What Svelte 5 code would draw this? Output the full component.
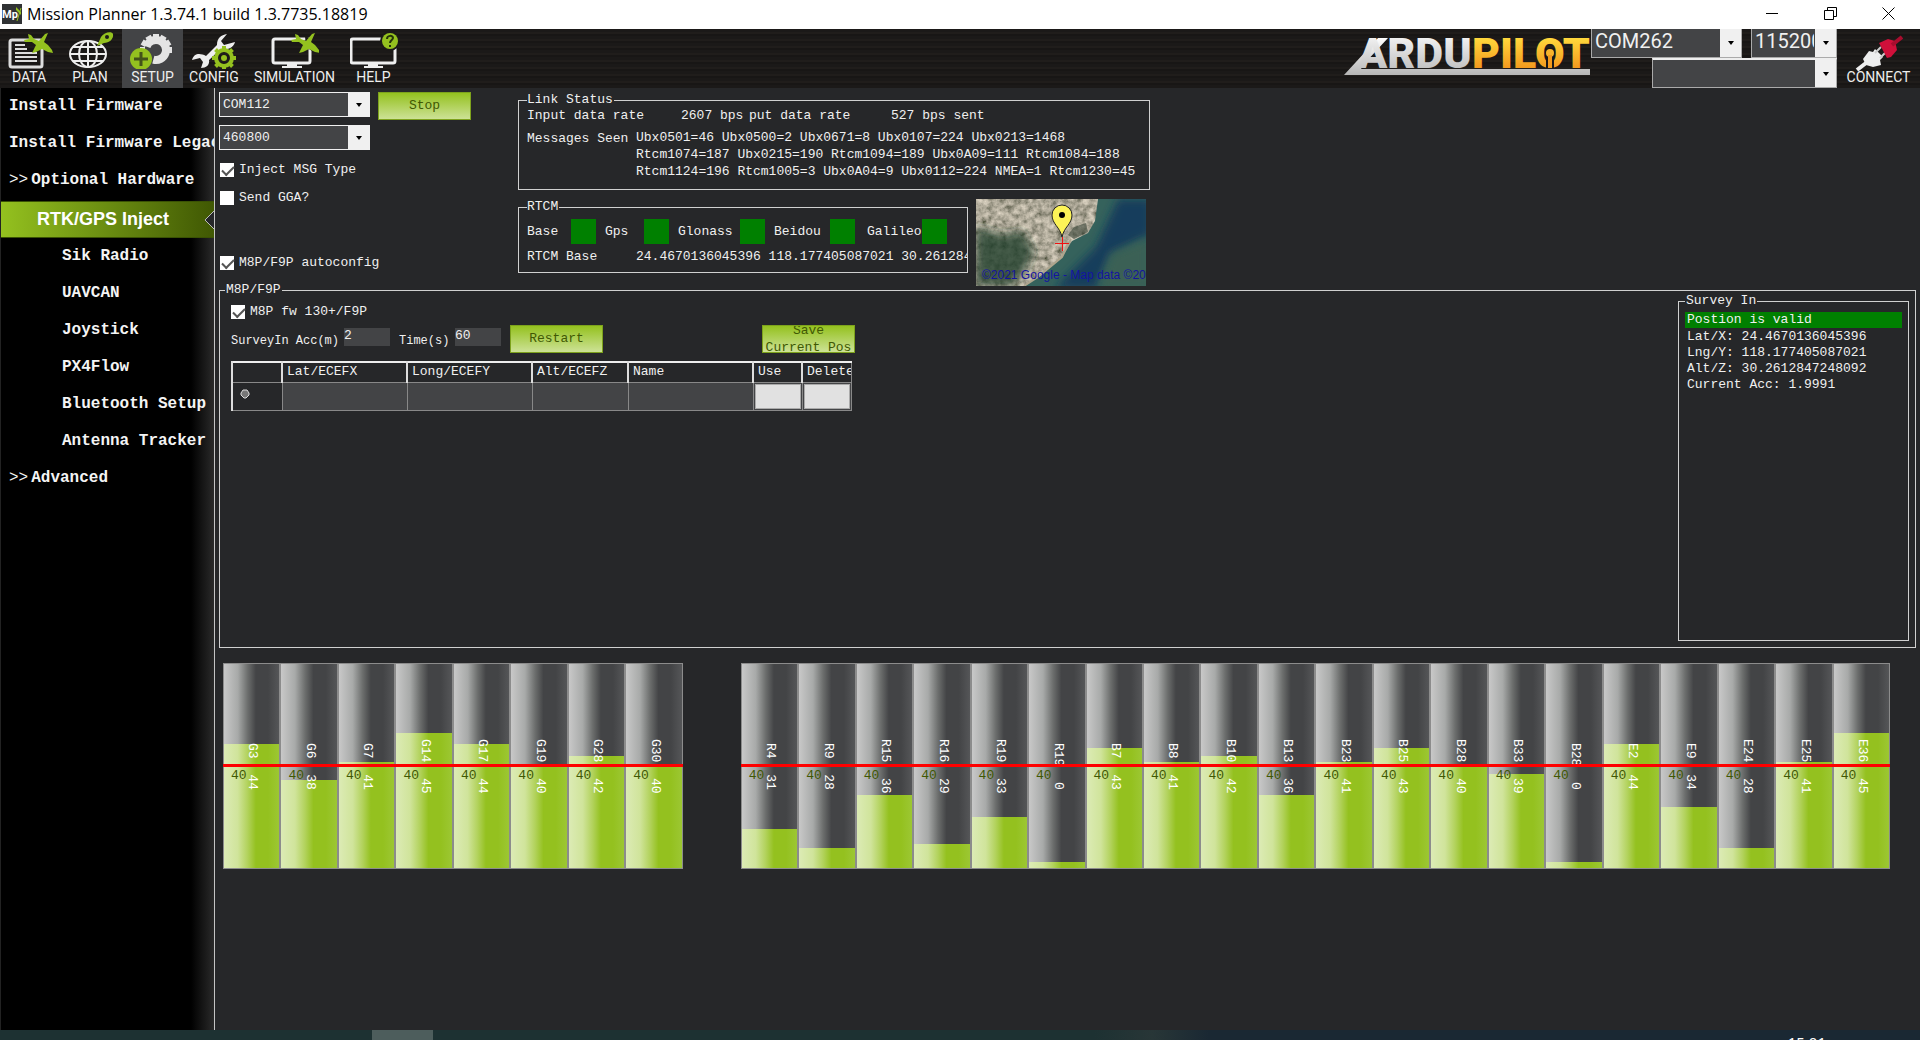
<script>
    const menu = [
        { label: "DATA", icon: "data", width: 58 },
        { label: "PLAN", icon: "plan", width: 64 },
        { label: "SETUP", icon: "setup", width: 61 },
        { label: "CONFIG", icon: "config", width: 62 },
        { label: "SIMULATION", icon: "simulation", width: 99 },
        { label: "HELP", icon: "help", width: 59 },
    ];
    let activeMenu = $state("SETUP");

    const pages = [
        { label: "Install Firmware" },
        { label: "Install Firmware Legacy" },
        { label: "Optional Hardware", expander: true },
        { label: "RTK/GPS Inject", sub: true },
        { label: "Sik Radio", sub: true },
        { label: "UAVCAN", sub: true },
        { label: "Joystick", sub: true },
        { label: "PX4Flow", sub: true },
        { label: "Bluetooth Setup", sub: true },
        { label: "Antenna Tracker", sub: true },
        { label: "Advanced", expander: true },
    ];
    let activePage = $state("RTK/GPS Inject");

    let injectMsgType = $state(true);
    let sendGGA = $state(false);
    let autoconfig = $state(true);
    let m8pFw = $state(true);
    let surveyAcc = $state("2");
    let surveyTime = $state("60");

    const systems = [
        { name: "Base", width: 78 },
        { name: "Gps", width: 73 },
        { name: "Glonass", width: 96 },
        { name: "Beidou", width: 93 },
        { name: "Galileo", width: 80 },
    ];

    // satellite, signal, fill in percent
    const gpsSats = [
        ["G3", 44, 61], ["G6", 38, 43], ["G7", 41, 52], ["G14", 45, 66],
        ["G17", 44, 61], ["G19", 40, 50], ["G28", 42, 55], ["G30", 40, 50],
    ];
    const otherSats = [
        ["R4", 31, 19], ["R9", 28, 10], ["R15", 36, 36], ["R16", 29, 12],
        ["R19", 33, 25], ["R19", 0, 3], ["B7", 43, 59], ["B8", 41, 52],
        ["B10", 42, 55], ["B13", 36, 36], ["B23", 41, 52], ["B25", 43, 59],
        ["B28", 40, 50], ["B33", 39, 46], ["B28", 0, 3], ["E2", 44, 61],
        ["E9", 34, 30], ["E24", 28, 10], ["E25", 41, 52], ["E36", 45, 66],
    ];

    const teeth = [0, 45, 90, 135, 180, 225, 270, 315];
    const bigTeeth = [-120, -90, -60, -30, 0, 30, 60, 90];
</script>

{#snippet plane()}
    <path fill="#94c11f" d="M4 1 L7 2 L10 6 L15 8 L21 1 L24 0 L20 9 L24 12 L28 17 L29 20 L24 19 L18 16 L12 19 L8 20 L12 12 L8 9 L1 9 L0 7 L5 6 Z" />
{/snippet}

{#snippet menuIcon(name)}
    <svg class="menu-icon" width="48" height="38" viewBox="0 0 48 38" aria-hidden="true">
        {#if name === "data"}
            <rect x="5" y="9" width="32" height="27" rx="2" fill="none" stroke="#ddd" stroke-width="3" />
            <path d="M10 14h10M10 18h12M10 22h22M10 26h22M10 30h22" stroke="#ddd" stroke-width="2" />
            <g transform="translate(19 2)">{@render plane()}</g>
        {:else if name === "plan"}
            <ellipse cx="22" cy="23" rx="18" ry="13" fill="none" stroke="#eee" stroke-width="2" />
            <ellipse cx="22" cy="23" rx="9" ry="13" fill="none" stroke="#eee" stroke-width="2" />
            <path d="M22 10v26M4 23h36M7 16h30M7 30h30" stroke="#eee" stroke-width="2" />
            <path fill="#94c11f" d="M31 15 L35 6 C38 1 46 0 47 3 C48 8 43 12 38 12 Z" />
            <circle cx="41" cy="6" r="2" fill="#1b1918" />
        {:else if name === "setup"}
            <circle cx="27" cy="19" r="10" fill="none" stroke="#e4e4e4" stroke-width="8" stroke-dasharray="46 17" transform="rotate(-160 27 19)" />
            {#each bigTeeth as a}
                <rect x="24" y="3" width="6" height="5" fill="#e4e4e4" transform={`rotate(${a} 27 19)`} />
            {/each}
            <circle cx="12" cy="28" r="11" fill="#94c11f" />
            <path d="M12 21v14M5 28h14" stroke="#43521a" stroke-width="3" />
        {:else if name === "config"}
            <path d="M37 3 L31 10 L34 14 L45 11 C43 18 36 19 31 18 L19 29 C20 34 16 37 11 37 L13 31 L10 27 L2 29 C4 22 10 22 16 25 L27 14 C27 7 31 4 37 3 Z" fill="#eee" />
            <circle cx="34" cy="27" r="8" fill="none" stroke="#94c11f" stroke-width="4" />
            {#each teeth as a}
                <rect x="32" y="15" width="4" height="4" fill="#94c11f" transform={`rotate(${a} 34 27)`} />
            {/each}
            <circle cx="34" cy="27" r="3" fill="#94c11f" />
        {:else if name === "simulation"}
            <rect x="2" y="8" width="37" height="24" rx="2" fill="none" stroke="#eee" stroke-width="3" />
            <path d="M16 32h10v3h5v2H11v-2h5z" fill="#eee" />
            <path d="M34 5l7 3v12l-6-4z" fill="#1b1918" />
            <g transform="translate(20 2)">{@render plane()}</g>
        {:else if name === "help"}
            <rect x="1" y="8" width="44" height="24" rx="2" fill="none" stroke="#eee" stroke-width="3" />
            <path d="M18 32h10v3h5v2H14v-2h4z" fill="#eee" />
            <circle cx="40" cy="10" r="10" fill="#1b1918" />
            <circle cx="40" cy="10" r="8" fill="#94c11f" />
            <path d="M37 8c0-4 6-4 6-1 0 2-3 2-3 5M40 14v2" fill="none" stroke="#25330a" stroke-width="2" />
        {/if}
    </svg>
{/snippet}

{#snippet barGroup(sats, label)}
    <div class="bar-group" style={`flex-grow: ${sats.length}`} role="group" aria-label={label}>
        {#each sats as [name, snr, fill]}
            <div class="bar">
                <div class="fill" style={`height: ${fill}%`}></div>
                <span class="sat">{`${name}  ${snr}`}</span>
                <span class="threshold">40</span>
            </div>
        {/each}
        <div class="limit"></div>
    </div>
{/snippet}

<div class="window">
    <header class="titlebar">
        <svg width="20" height="20" viewBox="0 0 20 20" aria-hidden="true">
            <rect width="20" height="20" fill="#303234" />
            <path d="M14 3l5 5v3l-5-5z" fill="#94c11f" />
            <path d="M15 17l4-13" stroke="#94c11f" />
            <text x="0" y="14" font-family="Roboto, sans-serif" font-size="11" font-weight="700" fill="#fff">Mp</text>
        </svg>
        <span class="title">Mission Planner 1.3.74.1 build 1.3.7735.18819</span>
        <div class="window-buttons">
            <button aria-label="Minimize"><svg width="12" height="12" viewBox="0 0 12 12"><path d="M0 5.5h12" stroke="#000" /></svg></button>
            <button aria-label="Restore"><svg width="13" height="13" viewBox="0 0 13 13"><path d="M.5 3.5h9v9h-9zM3.5 3V.5h9v9H10" fill="none" stroke="#000" /></svg></button>
            <button aria-label="Close"><svg width="13" height="13" viewBox="0 0 13 13"><path d="M.5.5l12 12M12.500.5l-12 12" stroke="#000" /></svg></button>
        </div>
    </header>

    <nav class="toolbar">
        {#each menu as item}
            <button
                class={{ "menu-button": true, active: activeMenu === item.label }}
                style={`width: ${item.width}px`}
                onclick={() => (activeMenu = item.label)}
            >
                {@render menuIcon(item.icon)}
                <span>{item.label}</span>
            </button>
        {/each}

        <svg class="logo" width="246" height="40" viewBox="0 0 246 40" role="img" aria-label="ArduPilot">
            <defs>
                <linearGradient id="silver" x1="0" y1="0" x2="0" y2="1">
                    <stop offset="0" stop-color="#fff" />
                    <stop offset="1" stop-color="#b5b5b5" />
                </linearGradient>
                <linearGradient id="gold" x1="0" y1="0" x2="0" y2="1">
                    <stop offset="0.2" stop-color="#ffd83c" />
                    <stop offset="0.8" stop-color="#f39a1e" />
                </linearGradient>
            </defs>
            <path d="M0 38 L34 1 L44 1 L20 27 L17 32 L246 32 V38 Z" fill="url(#silver)" />
            <text x="14" y="31" class="logo-text" fill="url(#silver)">ARDU</text>
            <text x="128" y="31" class="logo-text" fill="url(#gold)">PILOT</text>
            <path d="M206 18v13" stroke="#1b1918" stroke-width="8" />
            <circle cx="206" cy="16" r="4" fill="#f8b42c" />
            <path d="M206 18v13" stroke="#f39a1e" stroke-width="4" />
        </svg>

        <div class="link-settings">
            <div class="link-row">
                <div class="combo large port">
                    <select aria-label="Port"><option>COM262</option></select>
                </div>
                <div class="combo large baud">
                    <select aria-label="Baud rate"><option>115200</option></select>
                </div>
            </div>
            <div class="combo large vehicle">
                <select aria-label="Vehicle"><option></option></select>
            </div>
        </div>

        <button class="menu-button connect">
            <svg class="menu-icon" width="48" height="38" viewBox="0 0 48 38" aria-hidden="true">
                <path d="M2 36l9-7" stroke="#eee" stroke-width="4" />
                <path d="M8 25l6-8 4 1 2-3 8 8-3 3 1 5-8 2-7-2z" fill="#eee" />
                <path d="M20 19l6-6M25 24l6-6" stroke="#ccc" stroke-width="2" />
                <path d="M24 9l9-4 7 2 2 9-6 7-4 1z" fill="#d0103a" />
                <path d="M37 11l10-8" stroke="#a80d2e" stroke-width="4" />
            </svg>
            <span>CONNECT</span>
        </button>
    </nav>

    <div class="body">
        <nav class="sidebar">
            {#each pages as page}
                <a
                    href="#{page.label}"
                    class={{ sub: page.sub, selected: activePage === page.label }}
                    onclick={() => (activePage = page.label)}
                >
                    {#if page.expander}<span class="chevrons">&gt;&gt;</span>{/if}{page.label}
                    {#if activePage === page.label}
                        <svg class="notch" width="10" height="18" viewBox="0 0 10 18" aria-hidden="true">
                            <path d="M10 0 L1 9 L10 18" fill="#262729" stroke="#bbb" />
                        </svg>
                    {/if}
                </a>
            {/each}
        </nav>

        <main>
            <section class="top">
                <div class="source">
                    <div class="port-row">
                        <div class="combo">
                            <select aria-label="Source port"><option>COM112</option></select>
                        </div>
                        <button class="green">Stop</button>
                    </div>
                    <div class="combo">
                        <select aria-label="Source baud rate"><option>460800</option></select>
                    </div>
                    <label class="check inject"><input type="checkbox" bind:checked={injectMsgType}>Inject MSG Type</label>
                    <label class="check gga"><input type="checkbox" bind:checked={sendGGA}>Send GGA?</label>
                    <label class="check auto"><input type="checkbox" bind:checked={autoconfig}>M8P/F9P autoconfig</label>
                </div>

                <div class="status">
                    <fieldset class="link-status">
                        <legend>Link Status</legend>
                        <div class="rates">
                            <span class="rate-name">Input data rate</span>
                            <span class="rate-in">2607 bps</span>
                            <span class="rate-out">put data rate</span>
                            <span>527 bps sent</span>
                        </div>
                        <div class="messages">
                            <span class="messages-name">Messages Seen</span>
                            <p>
                                Ubx0501=46 Ubx0500=2 Ubx0671=8 Ubx0107=224 Ubx0213=1468<br>
                                Rtcm1074=187 Ubx0215=190 Rtcm1094=189 Ubx0A09=111 Rtcm1084=188<br>
                                Rtcm1124=196 Rtcm1005=3 Ubx0A04=9 Ubx0112=224 NMEA=1 Rtcm1230=45
                            </p>
                        </div>
                    </fieldset>

                    <div class="rtcm-row">
                        <fieldset class="rtcm">
                            <legend>RTCM</legend>
                            <div class="systems">
                                {#each systems as system}
                                    <div class="system" style={`width: ${system.width}px`}>
                                        <span>{system.name}</span>
                                        <i class="led"></i>
                                    </div>
                                {/each}
                            </div>
                            <div class="rtcm-base">
                                <span class="base-name">RTCM Base</span>
                                <span>24.4670136045396 118.177405087021 30.2612847248092</span>
                            </div>
                        </fieldset>

                        <svg class="map" width="170" height="87" viewBox="0 0 170 87" role="img" aria-label="Base position map">
                            <defs>
                                <filter id="terrain" x="0" y="0" width="100%" height="100%">
                                    <feTurbulence type="fractalNoise" baseFrequency="0.16" numOctaves="4" seed="8" />
                                    <feColorMatrix values="0.9 0 0 0 -0.02  0.8 0 0 0 0  0.7 0 0 0 -0.03  0 0 0 0 1" />
                                    <feComposite in2="SourceGraphic" operator="in" />
                                </filter>
                                <filter id="soft"><feGaussianBlur stdDeviation="4" /></filter>
                            </defs>
                            <rect width="170" height="87" fill="#35625c" />
                            <path d="M142 0 H175 V35 L135 55 L120 90 H78 L120 48 Z" fill="#143d5c" filter="url(#soft)" />
                            <path d="M172 40 L135 55 L123 90 H172 Z" fill="#3a6155" filter="url(#soft)" />
                            <path d="M0 0 H122 L119 22 L112 34 L96 42 L86 58 L62 78 L48 87 H0 Z" fill="#86796a" filter="url(#terrain)" />
                            <path d="M0 28 L26 36 L46 32 L58 52 L50 70 L36 87 H0 Z" fill="#1f3f2c" fill-opacity="0.8" filter="url(#soft)" />
                            <path d="M92 36 L98 28 L110 24 L112 33 L98 40 Z" fill="#1e2e22" fill-opacity="0.5" />
                            <path d="M95 40 L86 58 L62 78 L48 87" fill="none" stroke="#aea58d" stroke-width="2" />
                            <text x="6" y="80" font-family="Liberation Sans, sans-serif" font-size="12" fill="#1414a0">©2021 Google - Map data ©202</text>
                            <path d="M86 38 C84 28 76 25 76 16 A10 10 0 0 1 96 16 C96 25 88 28 86 38 Z" fill="#fcf357" stroke="#222" />
                            <circle cx="86" cy="16" r="3" fill="#000" />
                            <path d="M79 44.5h14M86.500 38v14" stroke="#f01010" stroke-width="1" />
                        </svg>
                    </div>
                </div>
            </section>

            <fieldset class="m8p">
                <legend>M8P/F9P</legend>
                <div class="m8p-body">
                    <div class="survey-setup">
                        <label class="check small"><input type="checkbox" bind:checked={m8pFw}>M8P fw 130+/F9P</label>
                        <div class="survey-row">
                            <label class="acc-name" for="acc">SurveyIn Acc(m)</label>
                            <input id="acc" type="text" bind:value={surveyAcc}>
                            <label class="time-name" for="time">Time(s)</label>
                            <input id="time" type="text" bind:value={surveyTime}>
                            <button class="green restart">Restart</button>
                            <button class="green save"><span>Save<br>Current Pos</span></button>
                        </div>
                        <table>
                            <colgroup>
                                <col class="row-head"><col class="wide"><col class="wide"><col class="alt"><col class="wide"><col class="narrow"><col class="narrow">
                            </colgroup>
                            <thead>
                                <tr>
                                    <th aria-label="Row"></th><th>Lat/ECEFX</th><th>Long/ECEFY</th><th>Alt/ECEFZ</th><th>Name</th><th>Use</th><th>Delete</th>
                                </tr>
                            </thead>
                            <tbody>
                                <tr>
                                    <th aria-label="New row">
                                        <svg width="10" height="10" viewBox="0 0 10 10" aria-hidden="true"><path d="M3 1h4l2 3v2L6 9H4L1 6V4z" fill="#777" stroke="#ddd" /></svg>
                                    </th>
                                    <td></td><td></td><td></td><td></td>
                                    <td><button class="cell-button" aria-label="Use"></button></td>
                                    <td><button class="cell-button" aria-label="Delete"></button></td>
                                </tr>
                            </tbody>
                        </table>
                    </div>

                    <fieldset class="survey-in">
                        <legend>Survey In</legend>
                        <p class="valid">Postion is valid</p>
                        <p>Lat/X: 24.4670136045396</p>
                        <p>Lng/Y: 118.177405087021</p>
                        <p>Alt/Z: 30.2612847248092</p>
                        <p>Current Acc: 1.9991</p>
                    </fieldset>
                </div>
            </fieldset>

            <section class="bars">
                {@render barGroup(gpsSats, "GPS")}
                {@render barGroup(otherSats, "Other systems")}
            </section>
        </main>
    </div>

    <footer class="taskbar">
        <span class="task"></span>
        <span class="clock">15:01</span>
    </footer>
</div>

<style>
    :global(body) {
        background-color: #262729;
    }

    * {
        box-sizing: border-box;
    }

    .window {
        display: flex;
        flex-direction: column;
        height: 100vh;
        overflow: hidden;
        color: #f0f0f0;
        background-color: #262729;
        font-family: "Liberation Mono", monospace;
        font-size: 13px;
        line-height: 16px;
    }

    button,
    select,
    input {
        margin: 0;
        padding: 0;
        border: none;
        border-radius: 0;
        font: inherit;
        color: inherit;
    }

    p {
        margin: 0;
    }

    /* Title bar */
    .titlebar {
        display: flex;
        align-items: center;
        flex: none;
        height: 29px;
        padding: 0 3px 2px 2px;
        background-color: #fff;
        color: #000;
    }

    .title {
        margin-left: 5px;
        font-family: "Open Sans", sans-serif;
        font-size: 16px;
    }

    .window-buttons {
        display: flex;
        margin-left: auto;
    }

    .window-buttons button {
        display: flex;
        align-items: center;
        justify-content: center;
        width: 58px;
        height: 27px;
        background: none;
    }

    /* Toolbar */
    .toolbar {
        display: flex;
        flex: none;
        height: 59px;
        background: repeating-linear-gradient(#1b1918 0 3px, #201d1b 3px 5px, #181615 5px 7px);
    }

    .menu-button {
        display: flex;
        flex-direction: column;
        align-items: center;
        flex: none;
        padding-top: 2px;
        background: none;
        font-family: Roboto, sans-serif;
        font-size: 14px;
        color: #eee;
    }

    .menu-button.active {
        background-color: #434446;
    }

    .menu-button span {
        line-height: 16px;
    }

    .menu-icon {
        display: block;
        flex: none;
    }

    .logo {
        flex: none;
        margin: 8px 1px 0 auto;
        overflow: visible;
    }

    .logo-text {
        font-family: Roboto, sans-serif;
        font-size: 43px;
        font-weight: 900;
    }

    .link-settings {
        display: flex;
        flex-direction: column;
        align-items: flex-end;
        flex: none;
        width: 246px;
    }

    .link-row {
        display: flex;
        justify-content: space-between;
        width: 100%;
    }

    .connect {
        width: 83px;
        padding-top: 5px;
    }

    .connect span {
        margin-top: -3px;
    }

    /* Combo boxes */
    .combo {
        position: relative;
        width: 151px;
        height: 25px;
        border: 1px solid #f0f0f0;
        background-color: #434446;
    }

    .combo::before {
        content: "";
        position: absolute;
        top: 0;
        right: 0;
        bottom: 0;
        width: 21px;
        background-color: #f0f0f0;
        pointer-events: none;
    }

    .combo::after {
        content: "";
        position: absolute;
        top: calc(50% - 2px);
        right: 7px;
        border: 3px solid transparent;
        border-top: 4px solid #000;
        border-bottom: none;
        pointer-events: none;
    }

    .combo select {
        display: block;
        width: 100%;
        height: 100%;
        padding: 0 22px 0 3px;
        appearance: none;
        background: none;
    }

    .combo.large {
        height: 29px;
        border-color: #aaa;
        border-top: none;
        font-family: Roboto, sans-serif;
        font-size: 20px;
    }

    .combo.large select {
        padding-bottom: 4px;
        line-height: 24px;
    }

    .combo.port {
        width: 151px;
    }

    .combo.baud {
        width: 86px;
    }

    .combo.vehicle {
        width: 185px;
        height: 30px;
        border-top: 2px solid #eee;
    }

    /* Sidebar */
    .body {
        display: flex;
        flex: 1;
        min-height: 0;
    }

    .sidebar {
        flex: none;
        width: 215px;
        border-left: 1px solid #222;
        border-right: 1px solid #c4c4c4;
        background: linear-gradient(to right, #000 190px, #2a2a2a 100%);
        font-size: 16px;
        font-weight: 700;
    }

    .sidebar a {
        display: block;
        position: relative;
        height: 37px;
        padding: 0 0 0 8px;
        overflow: hidden;
        line-height: 36px;
        white-space: nowrap;
        text-decoration: none;
        color: #f4f4f4;
    }

    .sidebar a.sub {
        padding-left: 61px;
    }

    .sidebar a.selected {
        margin-top: 2px;
        padding-left: 36px;
        border-top: 1px solid #3a5204;
        border-bottom: 1px solid #3a5204;
        background: linear-gradient(to right, #94c11f, #405803);
        font-family: "Liberation Sans", sans-serif;
        font-size: 18px;
        line-height: 34px;
        color: #fff;
    }

    .chevrons {
        margin-right: 3px;
        font-weight: 400;
    }

    .notch {
        position: absolute;
        top: 9px;
        right: 0;
    }

    /* Page */
    main {
        flex: 1;
        min-width: 0;
        padding: 4px 4px 0;
    }

    .top {
        display: flex;
    }

    .source {
        flex: none;
        width: 299px;
    }

    .port-row {
        display: flex;
        gap: 8px;
        height: 33px;
    }

    .green {
        width: 93px;
        height: 28px;
        border: 1px solid #7da21c;
        background: linear-gradient(#94c11f, #cde296);
        color: #405803;
        overflow: hidden;
    }

    .check {
        display: flex;
        align-items: center;
        gap: 5px;
        height: 16px;
        padding-left: 1px;
    }

    .inject {
        margin-top: 12px;
    }

    .gga {
        margin-top: 12px;
    }

    .auto {
        margin-top: 49px;
    }

    .check input {
        position: relative;
        flex: none;
        width: 14px;
        height: 14px;
        appearance: none;
        background-color: #fff;
    }

    .check input:checked::after {
        content: "";
        position: absolute;
        top: 3px;
        left: 2px;
        width: 10px;
        height: 5px;
        border-left: 2px solid #555;
        border-bottom: 2px solid #555;
        transform: rotate(-45deg);
    }

    fieldset {
        min-width: 0;
        margin: 0;
        padding: 0;
        border: 1px solid #d0d0d0;
    }

    legend {
        margin-left: 7px;
        padding: 0 1px 1px;
        line-height: 16px;
    }

    .link-status {
        width: 632px;
        height: 98px;
        padding-left: 8px;
    }

    .link-status legend,
    .rtcm legend {
        margin-left: 0;
        padding-left: 0;
    }

    .rates {
        display: flex;
        height: 20px;
        line-height: 14px;
    }

    .rate-name {
        width: 154px;
    }

    .rate-in {
        width: 68px;
    }

    .rate-out {
        width: 142px;
    }

    .messages {
        display: flex;
        line-height: 17px;
        white-space: nowrap;
    }

    .messages-name {
        width: 109px;
        padding-top: 1px;
    }

    .rtcm-row {
        display: flex;
        gap: 8px;
        margin-top: 9px;
    }

    .rtcm {
        width: 450px;
        height: 74px;
        padding: 3px 0 0 8px;
    }

    .systems {
        display: flex;
    }

    .system {
        display: flex;
        align-items: center;
        justify-content: space-between;
        flex: none;
        padding-right: 9px;
    }

    .system:nth-child(4) {
        padding-right: 12px;
    }

    .system:last-child {
        padding-right: 0;
    }

    .led {
        width: 25px;
        height: 25px;
        background-color: #008000;
    }

    .rtcm-base {
        display: flex;
        margin-top: 5px;
        overflow: hidden;
        white-space: nowrap;
    }

    .base-name {
        flex: none;
        width: 109px;
    }

    .map {
        flex: none;
        display: block;
    }

    /* Receiver group */
    .m8p {
        min-height: 366px;
        margin-top: -4px;
    }

    .m8p > legend {
        margin-left: 5px;
    }

    .m8p-body {
        display: flex;
        justify-content: space-between;
        min-height: 342px;
        padding: 0 6px 0 11px;
    }

    .survey-setup {
        padding-top: 5px;
    }

    .check.small {
        padding-left: 0;
        gap: 5px;
    }

    .survey-row {
        display: flex;
        margin: 5px 0 8px;
        height: 28px;
    }

    .survey-row label {
        flex: none;
        padding-top: 8px;
        font-size: 12px;
    }

    .survey-row input {
        width: 46px;
        height: 18px;
        margin: 3px 9px 0 0;
        padding-bottom: 3px;
        background-color: #434446;
    }

    .acc-name {
        width: 113px;
    }

    .time-name {
        width: 56px;
    }

    .save {
        display: flex;
        align-items: center;
        justify-content: center;
        margin-left: 159px;
        line-height: 17px;
    }

    table {
        width: 620px;
        table-layout: fixed;
        border-collapse: collapse;
        border: 1px solid #888;
        border-top: 2px solid #eee;
    }

    .row-head {
        width: 50px;
    }

    .wide {
        width: 125px;
    }

    .alt {
        width: 96px;
    }

    .narrow {
        width: 49px;
    }

    th {
        height: 20px;
        padding: 0 0 0 4px;
        overflow: hidden;
        border-left: 2px solid #ddd;
        font-weight: 400;
        text-align: left;
    }

    tbody th {
        padding-left: 7px;
    }

    td {
        height: 28px;
        padding: 1px;
        border: 1px solid #888;
        background-color: #434446;
    }

    tbody tr {
        border-top: 1px solid #888;
    }

    .cell-button {
        display: block;
        width: 100%;
        height: 25px;
        border: 1px solid #aaa;
        background-color: #e1e1e1;
    }

    .survey-in {
        width: 231px;
        margin-top: -6px;
        padding: 2px 6px 0;
    }

    .survey-in legend {
        margin-left: 0;
    }

    .survey-in p {
        padding-left: 2px;
    }

    .survey-in .valid {
        margin-bottom: 1px;
        background-color: #008000;
    }

    /* Signal bars */
    .bars {
        display: flex;
        gap: 58px;
        margin: 15px 26px 0 4px;
    }

    .bar-group {
        display: flex;
        position: relative;
        flex-basis: 0;
        height: 206px;
    }

    .bar {
        display: flex;
        flex: 1;
        flex-direction: column;
        justify-content: flex-end;
        position: relative;
        border: 1px solid #8c8c8c;
        background: linear-gradient(to right, #c8c8c8, #a8aaa9 25%, #6c6e6d 43%, #434446 58%, #434446 80%, #555658);
    }

    .fill {
        background: linear-gradient(to right, #dcebb5, #d0e49b 25%, #b2d25c 43%, #94c11f 58%, #94c11f 80%, #9cc733);
    }

    .sat {
        position: absolute;
        inset: 0;
        text-align: center;
        line-height: 54px;
        writing-mode: vertical-rl;
        white-space: pre;
        color: #fff;
    }

    .threshold {
        position: absolute;
        top: 104px;
        left: 7px;
        color: #405803;
    }

    .limit {
        position: absolute;
        top: 101px;
        right: 0;
        left: 0;
        height: 3px;
        background-color: #f00;
    }

    /* Taskbar */
    .taskbar {
        display: flex;
        flex: none;
        justify-content: space-between;
        height: 10px;
        padding: 0 94px 0 372px;
        overflow: hidden;
        background: linear-gradient(to right, #1d3132 57%, #283637 60%, #1a2833 63%);
    }

    .task {
        width: 61px;
        background-color: #4d5d5c;
    }

    .clock {
        padding-top: 4px;
        font-family: "Noto Sans", sans-serif;
        font-size: 15px;
        color: #fff;
    }
</style>
